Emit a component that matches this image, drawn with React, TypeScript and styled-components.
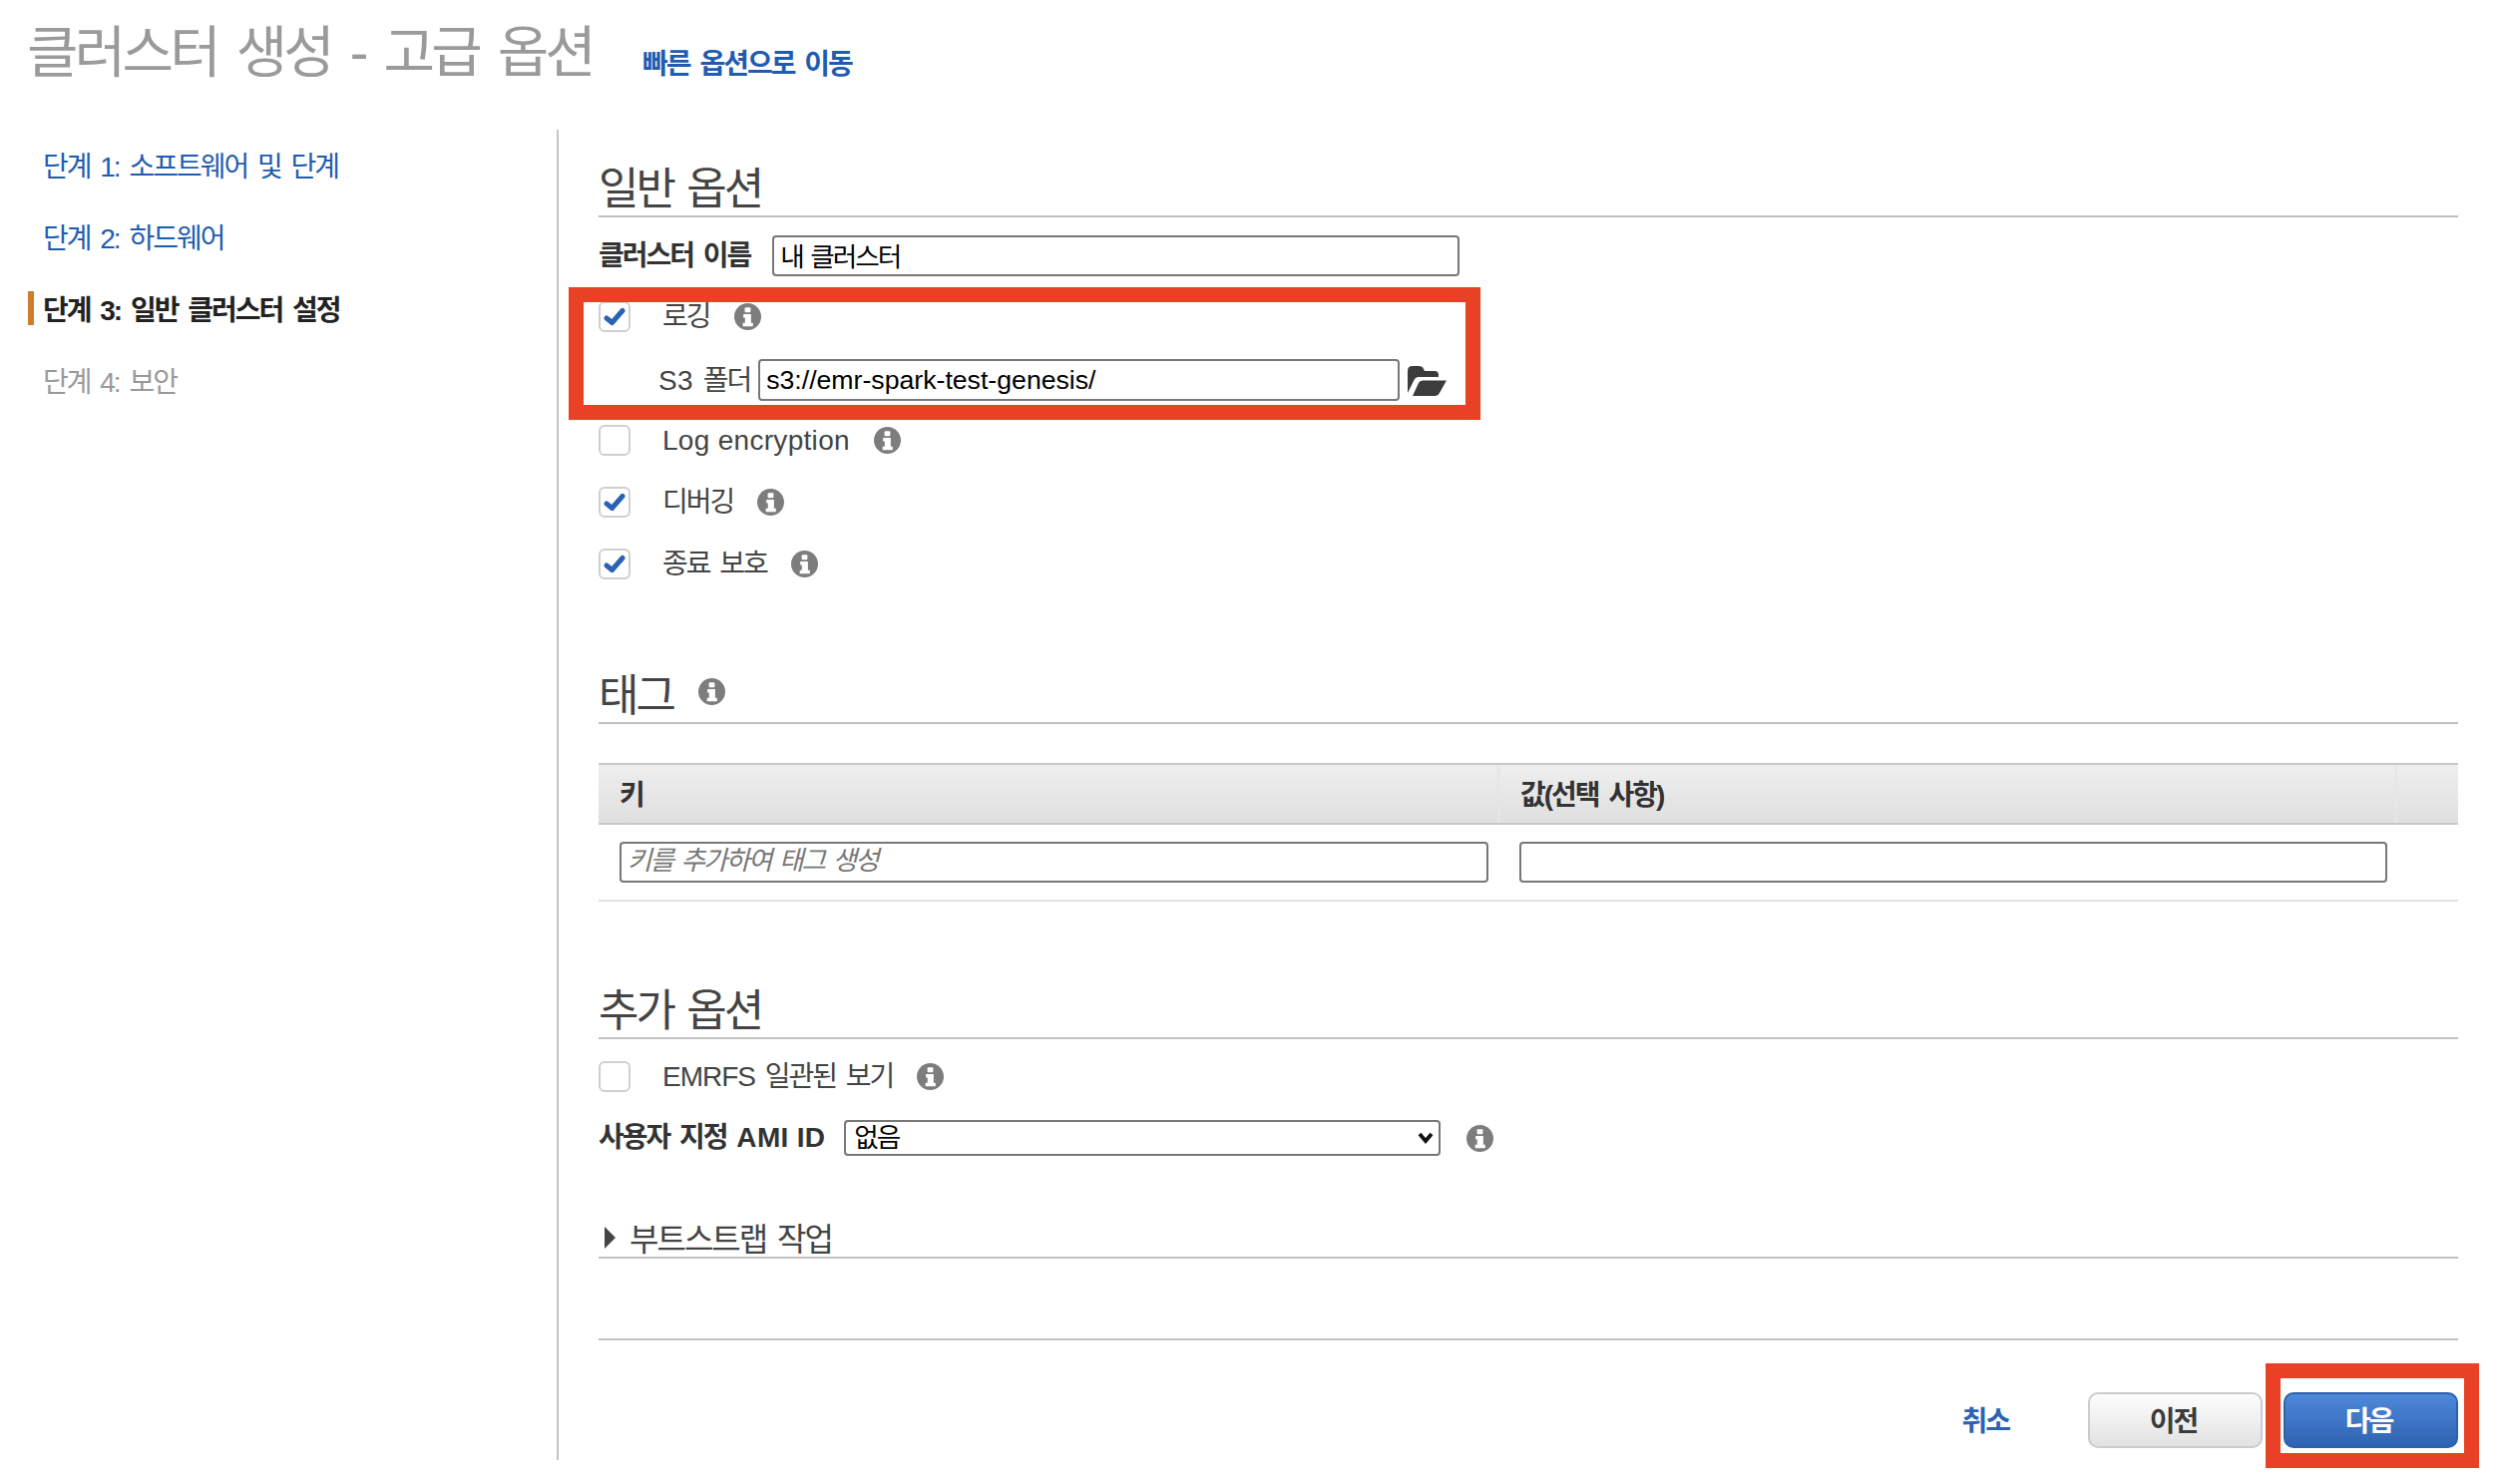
import React from 'react';
import styled, { createGlobalStyle } from 'styled-components';

const GlobalStyle = createGlobalStyle`
  html, body {
    margin: 0;
    padding: 0;
    background: #fff;
  }
  body {
    font-family: "Liberation Sans", "Noto Sans CJK KR", sans-serif;
    letter-spacing: -2px;
    word-spacing: 4px;
    color: #444;
  }
  input, select, button {
    font-family: inherit;
    letter-spacing: inherit;
    word-spacing: inherit;
  }
`;

const Page = styled.div`
  width: 2506px;
  height: 1488px;
  overflow: hidden;
`;

const TitleRow = styled.header`
  height: 130px;
  padding-left: 27px;
  padding-top: 21px;
  box-sizing: border-box;
  display: flex;
  align-items: flex-start;
`;

const Title = styled.h1`
  margin: 0;
  font-size: 56px;
  line-height: 64px;
  font-weight: 400;
  letter-spacing: -3.8px;
  word-spacing: 7px;
  color: #9a9a9a;
`;

const QuickLink = styled.a`
  margin-left: 50px;
  margin-top: 25px;
  font-size: 28px;
  line-height: 38px;
  font-weight: 700;
  color: #1f5cb0;
`;

const Body = styled.div`
  display: flex;
  align-items: flex-start;
`;

const Sidebar = styled.nav`
  width: 560px;
  height: 1334px;
  box-sizing: border-box;
  border-right: 2px solid #c4c4c4;
  padding-left: 28px;
`;

const Step = styled.div<{ $state: 'link' | 'active' | 'off' }>`
  height: 72px;
  display: flex;
  align-items: center;
  font-size: 28px;
  font-weight: ${p => (p.$state === 'active' ? 700 : 400)};
  color: ${p => (p.$state === 'active' ? '#222' : p.$state === 'off' ? '#999' : '#1f5cb0')};
  padding-bottom: 3px;
  box-sizing: border-box;
  &::before {
    content: '';
    width: 6px;
    height: 34px;
    margin-right: 9px;
    background: ${p => (p.$state === 'active' ? '#cf7c2b' : 'transparent')};
  }
`;

const Main = styled.main`
  width: 1864px;
  margin-left: 40px;
`;

const SectionHeading = styled.div<{ $top: number }>`
  margin-top: ${p => p.$top}px;
  height: 39px;
  padding-bottom: 11px;
  border-bottom: 2px solid #c0c0c0;
  display: flex;
  align-items: center;
  font-size: 44px;
  letter-spacing: -3px;
  word-spacing: 4px;
  color: #444;
  gap: 25px;
`;

const FormRow = styled.div<{ $top: number; $indent?: number }>`
  margin-top: ${p => p.$top}px;
  padding-left: ${p => p.$indent ?? 0}px;
  display: flex;
  align-items: center;
`;

const BoldLabel = styled.label`
  font-size: 28px;
  line-height: 1;
  font-weight: 700;
  color: #333;
`;

const TextInput = styled.input<{ $w: number; $h?: number; $ml?: number; $latin?: boolean }>`
  width: ${p => p.$w}px;
  height: ${p => p.$h ?? 41}px;
  margin-left: ${p => p.$ml ?? 0}px;
  box-sizing: border-box;
  border: 2px solid #777;
  border-radius: 4px;
  padding: 0 6px ${p => (p.$latin ? 0 : 2)}px;
  font-size: 26.67px;
  letter-spacing: ${p => (p.$latin ? '0' : '-2px')};
  word-spacing: 2px;
  color: #000;
  background: #fff;
  outline: none;
  &::placeholder {
    color: #777;
    font-style: italic;
    word-spacing: 3px;
    opacity: 1;
  }
`;

const Box = styled.span`
  width: 32px;
  height: 31px;
  box-sizing: border-box;
  border: 2px solid #cfcfcf;
  border-radius: 6px;
  display: inline-flex;
  align-items: center;
  justify-content: center;
  flex: none;
`;

const CheckLabel = styled.span<{ $ml?: number }>`
  margin-left: ${p => p.$ml ?? 32}px;
  font-size: 28px;
  line-height: 31px;
  color: #444;
`;

const Latin = styled.span<{ $ls?: number }>`
  letter-spacing: ${p => p.$ls ?? 0.3}px;
  word-spacing: 0;
`;

const InfoSvg = styled.svg<{ $ml?: number }>`
  width: 27px;
  height: 27px;
  margin-left: ${p => p.$ml ?? 24}px;
  flex: none;
`;

const Highlighted = styled.div`
  position: relative;
`;

const RedBox = styled.div<{ $l: number; $t: number; $w: number; $h: number }>`
  position: absolute;
  left: ${p => p.$l}px;
  top: ${p => p.$t}px;
  width: ${p => p.$w}px;
  height: ${p => p.$h}px;
  box-sizing: border-box;
  border: 15px solid #e94125;
  pointer-events: none;
`;

const FolderSvg = styled.svg`
  width: 39px;
  height: 31px;
  margin-left: 8px;
`;

const TagTable = styled.div`
  margin-top: 39px;
  border-bottom: 2px solid #e2e2e2;
`;

const TagHead = styled.div`
  display: grid;
  grid-template-columns: 903px 900px 1fr;
  height: 62px;
  box-sizing: border-box;
  border-top: 2px solid #c8c8c8;
  border-bottom: 2px solid #c8c8c8;
  background: linear-gradient(#eeeeee, #dfdfdf);
`;

const TagCell = styled.div`
  display: flex;
  align-items: center;
  padding-left: 21px;
  padding-bottom: 2px;
  font-size: 28px;
  font-weight: 700;
  color: #333;
  border-right: 2px solid #e6e6e6;
  &:last-child {
    border-right: none;
  }
`;

const TagBody = styled.div`
  display: flex;
  gap: 31px;
  padding: 17px 0 17px 21px;
`;

const SelectWrap = styled.div`
  position: relative;
  margin-left: 19px;
`;

const Select = styled.select`
  display: block;
  width: 598px;
  height: 36px;
  box-sizing: border-box;
  appearance: none;
  border: 2px solid #777;
  border-radius: 4px;
  padding: 0 8px;
  font-size: 26.67px;
  color: #000;
  background: #fff;
`;

const SelectChevron = styled.svg`
  position: absolute;
  right: 7px;
  top: 12px;
  width: 16px;
  height: 12px;
`;

const Disclosure = styled.div`
  margin-top: 65px;
  height: 31px;
  padding-bottom: 5px;
  border-bottom: 2px solid #c0c0c0;
  display: flex;
  align-items: center;
  font-size: 32px;
  color: #444;
`;

const Triangle = styled.span`
  width: 0;
  height: 0;
  margin: 2px 14px 0 6px;
  border-left: 11px solid #444;
  border-top: 11px solid transparent;
  border-bottom: 11px solid transparent;
`;

const Divider = styled.div`
  margin-top: 80px;
  border-top: 2px solid #c0c0c0;
`;

const Footer = styled.div`
  position: relative;
  margin-top: 52px;
  display: flex;
  justify-content: flex-end;
  align-items: center;
`;

const CancelLink = styled.a`
  margin-right: 79px;
  padding-bottom: 2px;
  font-size: 28px;
  font-weight: 700;
  color: #2b63b3;
`;

const Button = styled.button<{ $primary?: boolean }>`
  width: 175px;
  height: 56px;
  box-sizing: border-box;
  margin-left: ${p => (p.$primary ? 21 : 0)}px;
  padding: 0 4px 2px 0;
  border: 2px solid ${p => (p.$primary ? '#2d61ad' : '#cccccc')};
  border-radius: 10px;
  font-size: 28px;
  font-weight: 700;
  color: ${p => (p.$primary ? '#fff' : '#3c3c3c')};
  background: ${p =>
    p.$primary ? 'linear-gradient(#4f89da, #2f63b2)' : 'linear-gradient(#fdfdfd, #e2e2e2)'};
`;

const InfoIcon: React.FC<{ ml?: number }> = ({ ml }) => (
  <InfoSvg $ml={ml} viewBox="0 0 28 28">
    <circle cx="14" cy="14" r="14" fill="#7d7d7d" />
    <rect x="11" y="4.5" width="6" height="5" rx="1" fill="#fff" />
    <path d="M9.5 11.5 H17.5 V20.5 H19.5 V24 H9 V20.5 H11.2 V15 H9.5 Z" fill="#fff" />
  </InfoSvg>
);

const FolderIcon = () => (
  <FolderSvg viewBox="0 0 39 31">
    <path
      d="M0 28 V6 Q0 1 5 1 H11 Q15 1 16 4 L17 6 H27 Q31 6 31 10 V12 H11 Q8 12 6.5 15 Z"
      fill="#3c3c3c"
    />
    <path d="M5 31 L11 18 Q12 15.5 15 15.5 H39 L32 28 Q30.5 31 28 31 Z" fill="#3c3c3c" />
  </FolderSvg>
);

const Check = () => (
  <svg width="22" height="19" viewBox="0 0 22 19">
    <path d="M3 11 L8.5 15.5 L19 3.5" fill="none" stroke="#2a62b5" strokeWidth="5" strokeLinecap="round" strokeLinejoin="round" />
  </svg>
);

const CheckRow: React.FC<{ top: number; checked?: boolean; children: React.ReactNode }> = ({
  top,
  checked,
  children,
}) => (
  <FormRow $top={top}>
    <Box>{checked && <Check />}</Box>
    <CheckLabel>{children}</CheckLabel>
    <InfoIcon />
  </FormRow>
);

export default function App() {
  return (
    <Page>
      <GlobalStyle />
      <TitleRow>
        <Title>클러스터 생성 - 고급 옵션</Title>
        <QuickLink>빠른 옵션으로 이동</QuickLink>
      </TitleRow>
      <Body>
        <Sidebar>
          <Step $state="link">단계 1: 소프트웨어 및 단계</Step>
          <Step $state="link">단계 2: 하드웨어</Step>
          <Step $state="active">단계 3: 일반 클러스터 설정</Step>
          <Step $state="off">단계 4: 보안</Step>
        </Sidebar>
        <Main>
          <SectionHeading $top={36}>일반 옵션</SectionHeading>
          <FormRow $top={18}>
            <BoldLabel>클러스터 이름</BoldLabel>
            <TextInput $w={689} $ml={22} value="내 클러스터" readOnly />
          </FormRow>
          <Highlighted>
            <CheckRow top={25} checked>
              로깅
            </CheckRow>
            <FormRow $top={27} $indent={60}>
              <CheckLabel $ml={0}>
                <Latin>S3</Latin> 폴더
              </CheckLabel>
              <TextInput $w={643} $h={42} $ml={8} $latin value="s3://emr-spark-test-genesis/" readOnly />
              <FolderIcon />
            </FormRow>
            <RedBox $l={-30} $t={-14} $w={914} $h={133} />
          </Highlighted>
          <CheckRow top={24}>
            <Latin>Log encryption</Latin>
          </CheckRow>
          <CheckRow top={31} checked>
            디버깅
          </CheckRow>
          <CheckRow top={31} checked>
            종료 보호
          </CheckRow>
          <SectionHeading $top={93}>
            태그
            <InfoIcon ml={0} />
          </SectionHeading>
          <TagTable>
            <TagHead>
              <TagCell>키</TagCell>
              <TagCell>값(선택 사항)</TagCell>
              <TagCell />
            </TagHead>
            <TagBody>
              <TextInput $w={871} placeholder="키를 추가하여 태그 생성" readOnly />
              <TextInput $w={870} readOnly />
            </TagBody>
          </TagTable>
          <SectionHeading $top={86}>추가 옵션</SectionHeading>
          <CheckRow top={22}>
            <Latin $ls={-1}>EMRFS</Latin> 일관된 보기
          </CheckRow>
          <FormRow $top={28}>
            <BoldLabel>
              사용자 지정 <Latin>AMI ID</Latin>
            </BoldLabel>
            <SelectWrap>
              <Select defaultValue="none">
                <option value="none">없음</option>
              </Select>
              <SelectChevron viewBox="0 0 16 12">
                <path d="M2 2 L8 9 L14 2" fill="none" stroke="#111" strokeWidth="3.8" />
              </SelectChevron>
            </SelectWrap>
            <InfoIcon ml={26} />
          </FormRow>
          <Disclosure>
            <Triangle />
            부트스트랩 작업
          </Disclosure>
          <Divider />
          <Footer>
            <CancelLink>취소</CancelLink>
            <Button>이전</Button>
            <Button $primary>다음</Button>
            <RedBox $l={1671} $t={-29} $w={214} $h={105} />
          </Footer>
        </Main>
      </Body>
    </Page>
  );
}
